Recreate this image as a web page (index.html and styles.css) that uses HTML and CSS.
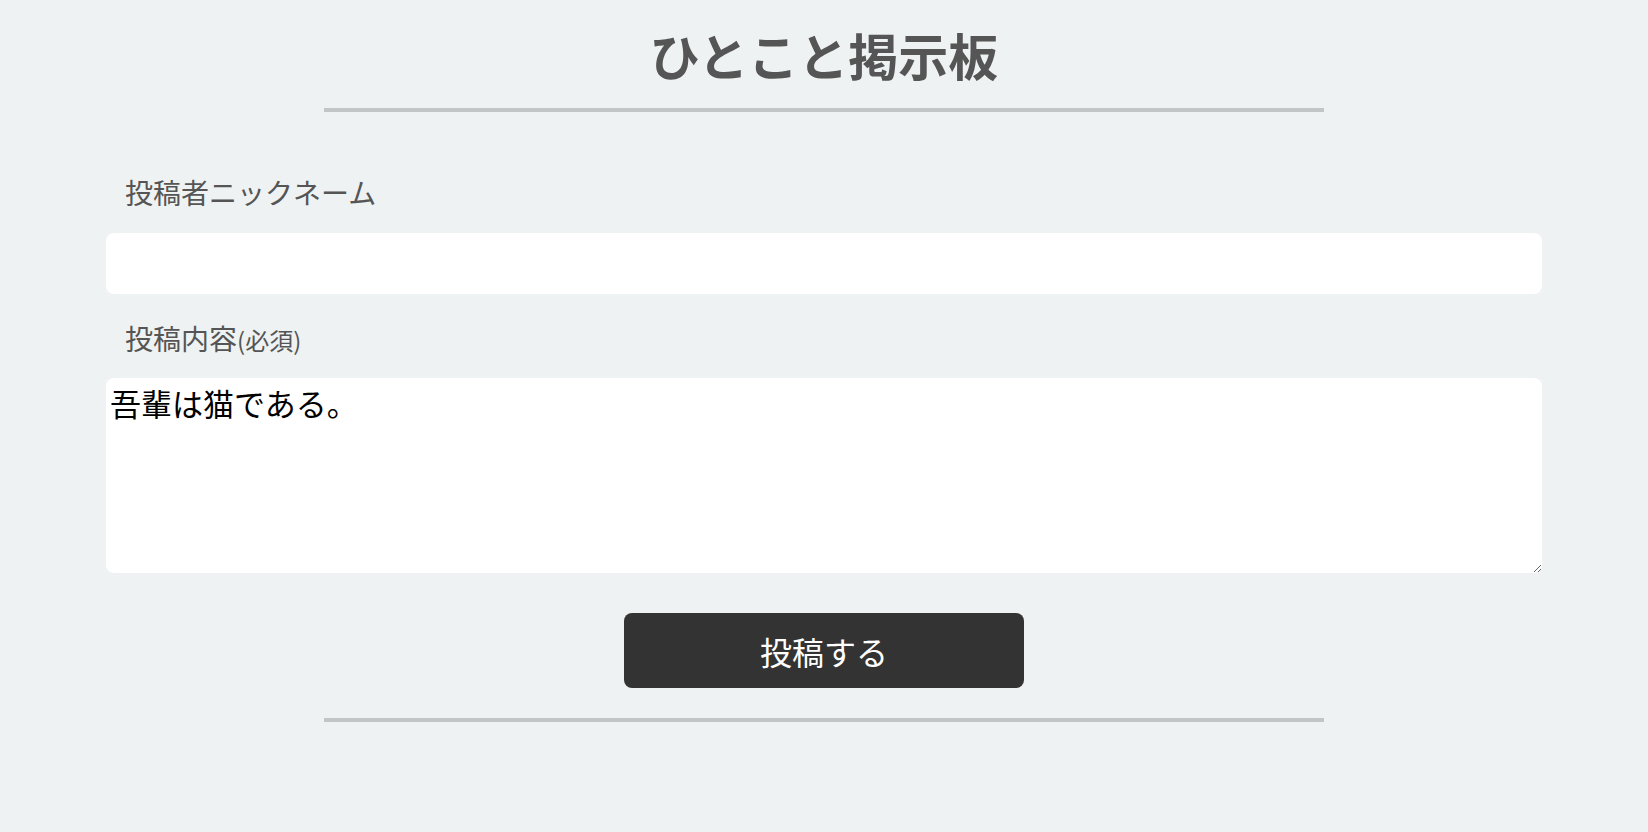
FILE: index.html
```html
<!DOCTYPE html>
<html lang="ja">
<head>
<meta charset="utf-8">
<title>ひとこと掲示板</title>
<link rel="stylesheet" href="styles.css">
</head>
<body>
<main class="page">
  <h1 class="title">ひとこと掲示板</h1>
  <div class="rule"></div>
  <form class="form">
    <label class="label" for="nick">投稿者ニックネーム</label>
    <input class="field" id="nick" type="text">
    <label class="label label-second" for="body">投稿内容<span class="req">(必須)</span></label>
    <textarea class="area" id="body">吾輩は猫である。</textarea>
    <div class="actions">
      <button class="submit" type="button">投稿する</button>
    </div>
  </form>
  <div class="rule rule-bottom"></div>
</main>
</body>
</html>
```

FILE: styles.css
```css
html, body {
  margin: 0;
  padding: 0;
  background: #eef2f3;
}

body {
  font-family: "Noto Sans CJK JP", "Noto Sans", sans-serif;
  color: #555;
}

.page {
  display: flex;
  flex-direction: column;
  align-items: center;
  padding-top: 24px;
}

.title {
  margin: 0;
  font-size: 50px;
  line-height: 60px;
  font-weight: 700;
  color: #555;
}

.rule {
  width: 1000px;
  height: 4px;
  background: #c1c5c6;
  margin-top: 24px;
}

.rule-bottom {
  margin-top: 30px;
}

.form {
  width: 1436px;
  display: flex;
  flex-direction: column;
  margin-top: 62px;
}

.label {
  display: block;
  font-size: 28px;
  line-height: 36px;
  height: 36px;
  padding-left: 19px;
  color: #555;
  margin-bottom: 23px;
}

.label-second {
  margin-top: 26px;
  margin-bottom: 22px;
}

.req {
  font-size: 24px;
  line-height: 1;
}

.field {
  box-sizing: border-box;
  width: 100%;
  height: 61px;
  border: none;
  border-radius: 8px;
  background: #fff;
  padding: 0 6px;
  font-family: "Noto Sans CJK JP", sans-serif;
  font-size: 28px;
  outline: none;
}

.area {
  box-sizing: border-box;
  width: 100%;
  height: 195px;
  border: none;
  border-radius: 8px;
  background: #fff;
  padding: 3px 4px;
  font-family: "Noto Sans CJK JP", sans-serif;
  font-size: 31px;
  line-height: 44px;
  color: #000;
  outline: none;
  display: block;
}

.actions {
  display: flex;
  justify-content: center;
  margin-top: 40px;
}

.submit {
  width: 400px;
  height: 75px;
  border: none;
  border-radius: 8px;
  background: #333;
  color: #fff;
  font-family: "Noto Sans CJK JP", sans-serif;
  font-size: 32px;
  cursor: pointer;
}
```
